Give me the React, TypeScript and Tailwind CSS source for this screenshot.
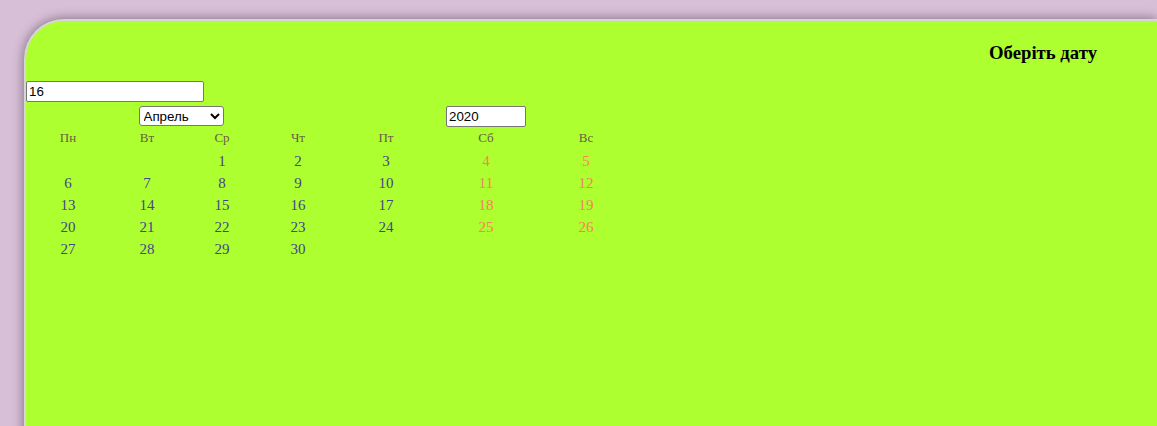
import { useState } from "react";

const months = ["Январь", "Февраль", "Март", "Апрель", "Май", "Июнь", "Июль", "Август", "Сентябрь", "Октябрь", "Ноябрь", "Декабрь"];
const weekDays = ["Пн", "Вт", "Ср", "Чт", "Пт", "Сб", "Вс"];

function buildDays(year: number, month: number) {
  const first = (new Date(year, month, 1).getDay() + 6) % 7;
  const total = new Date(year, month + 1, 0).getDate();
  const cells: (number | null)[] = Array(first).fill(null);
  for (let d = 1; d <= total; d++) cells.push(d);
  return cells;
}

export default function App() {
  const [day, setDay] = useState("16");
  const [month, setMonth] = useState(3);
  const [year, setYear] = useState("2020");
  const cells = buildDays(Number(year) || 2020, month);

  return (
    <div className="w-full h-[426px] overflow-hidden bg-[#d8bfd8] pt-[19px] pl-[24px]">
      <div className="h-[500px] bg-[#adff2f] border-l-2 border-t-2 border-[#d6d6d6] rounded-tl-[40px] shadow-[0_0_12px_rgba(0,0,0,0.45)] font-['Liberation_Serif',serif]">
        <div className="pt-[21px] pr-[60px] text-right">
          <h3 className="text-[18.72px] leading-[22px] font-bold text-black">Оберіть дату</h3>
        </div>
        <div className="mt-[17px]">
          <input
            value={day}
            onChange={(e) => setDay(e.target.value)}
            className="block w-[178px] h-[21px] bg-white border border-[#767676] rounded-[2px] px-[2px] text-[13.33px] font-['Liberation_Sans',sans-serif] text-black outline-none"
          />
        </div>
        <div className="mt-[3px] grid grid-cols-[84px_74px_76px_76px_100px_100px_100px] auto-rows-[22px] items-center text-center">
          <div className="col-span-4 flex justify-center">
            <select
              value={month}
              onChange={(e) => setMonth(Number(e.target.value))}
              className="w-[85px] h-[20px] bg-white border border-[#767676] rounded-[3px] text-[13.33px] font-['Liberation_Sans',sans-serif] text-black"
            >
              {months.map((m, i) => (
                <option key={m} value={i}>{m}</option>
              ))}
            </select>
          </div>
          <div className="col-span-3 flex justify-center">
            <input
              value={year}
              onChange={(e) => setYear(e.target.value)}
              className="w-[80px] h-[21px] bg-white border border-[#767676] rounded-[2px] px-[2px] text-[13.33px] font-['Liberation_Sans',sans-serif] text-black outline-none"
            />
          </div>
          {weekDays.map((w) => (
            <div key={w} className="text-[13px] text-[#6a5a48]">{w}</div>
          ))}
          {cells.map((d, i) => (
            <div
              key={i}
              className={i % 7 >= 5 ? "pt-[2px] text-[15px] text-[#f0845c]" : "pt-[2px] text-[15px] text-[#45448f]"}
            >
              {d ?? ""}
            </div>
          ))}
        </div>
      </div>
    </div>
  );
}
